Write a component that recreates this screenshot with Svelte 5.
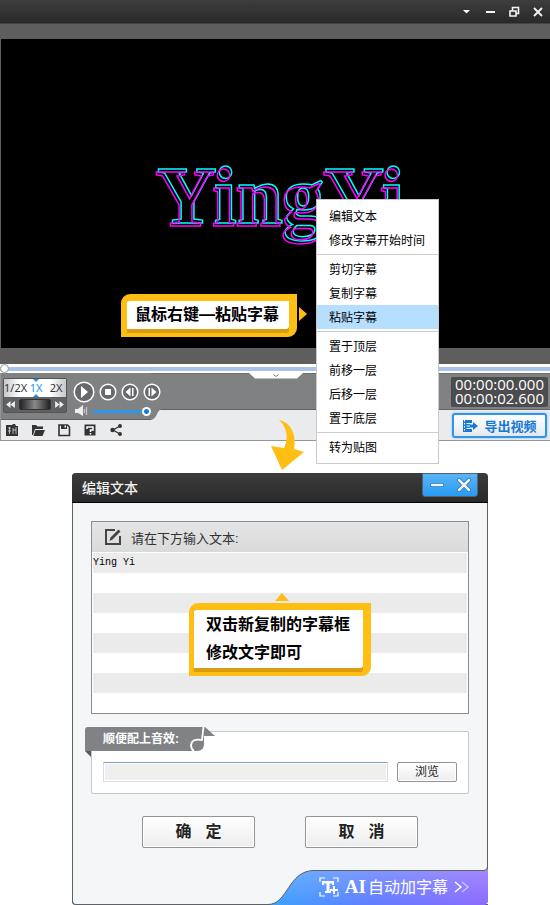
<script>
  const menuGroups = [
    ["编辑文本", "修改字幕开始时间"],
    ["剪切字幕", "复制字幕", "粘贴字幕"],
    ["置于顶层", "前移一层", "后移一层", "置于底层"],
    ["转为贴图"],
  ];

  let selected = "粘贴字幕";
  let position = 0;
  let volume = 100;
  let text = "Ying Yi";
  let sound = "";
</script>

<main>
  <section class="editor">
    <header class="titlebar">
      <button aria-label="菜单"><svg viewBox="0 0 24 24"><path d="M9 10h7l-3.500 3.500z" fill="#fff" /></svg></button>
      <button aria-label="最小化"><svg viewBox="0 0 24 24"><path d="M8 12h9" /></svg></button>
      <button aria-label="还原"><svg viewBox="0 0 24 24"><path d="M8 11h6v5h-6zM10.500 10.500v-3h6v6h-2" stroke-width="1.600" /></svg></button>
      <button aria-label="关闭"><svg viewBox="0 0 24 24"><path d="M8 8l8 8M16 8l-8 8" stroke-width="1.800" /></svg></button>
    </header>

    <div class="preview">
      <svg class="caption" viewBox="0 0 250 100" role="img" aria-label="YingYi">
        <text x="4" y="83">YingYi</text>
      </svg>
    </div>

    <input class="seek" type="range" aria-label="播放进度" bind:value={position} />

    <div class="deck">
      <div class="left">
        <div class="playback">
          <div class="speed">
            <div class="rates">
              <button>1/2X</button>
              <button class="active">1X</button>
              <button>2X</button>
            </div>
            <div class="dial">
              <button aria-label="减速"><svg viewBox="0 0 10 8"><path d="M5 0v8L0 4zM10 0v8L5 4z" /></svg></button>
              <span class="wheel"></span>
              <button aria-label="加速"><svg viewBox="0 0 10 8"><path d="M5 0v8l5-4zM0 0v8l5-4z" /></svg></button>
            </div>
          </div>
          <div class="transport">
            <div class="buttons">
              <button class="play" aria-label="播放"><svg viewBox="0 0 22 22"><circle cx="11" cy="11" r="9.800" /><path d="M8 5v12l7-6z" /></svg></button>
              <button aria-label="停止"><svg viewBox="0 0 18 18"><circle cx="9" cy="9" r="7.800" /><path d="M6 6h6v6H6z" /></svg></button>
              <button aria-label="上一帧"><svg viewBox="0 0 18 18"><circle cx="9" cy="9" r="7.800" /><path d="M9.500 4.500v9L4.500 9zM11 5h1.500v8H11z" /></svg></button>
              <button aria-label="下一帧"><svg viewBox="0 0 18 18"><circle cx="9" cy="9" r="7.800" /><path d="M8.500 4.500v9l5-4.500zM5.500 5H7v8H5.500z" /></svg></button>
            </div>
            <label class="volume">
              <svg viewBox="0 0 14 12"><path d="M0 4h3l5-4v11L3 8H0z" fill="#eee" /><path d="M9.500 4v4M11.500 2v8" stroke="#c4c4c4" stroke-width="1.300" fill="none" /></svg>
              <input type="range" aria-label="音量" bind:value={volume} />
            </label>
          </div>
        </div>
        <div class="tools">
          <button aria-label="新建"><svg viewBox="0 0 14 14"><path d="M1 2h6l1-1h2l1 2h2v10H1z" fill="#333" /><path d="M3 5h3M4.500 4v7M3 8h3M8 5v6M11 4v7M8 7h3" stroke="#e9eaec" fill="none" stroke-width=".7" /></svg></button>
          <button aria-label="打开"><svg viewBox="0 0 14 14"><path d="M1 2h4l1.500 1.500H12V6H4l-2 6H1z" fill="#333" /><path d="M4.500 7H14l-2.500 6H2.500z" fill="#333" /></svg></button>
          <button aria-label="保存"><svg viewBox="0 0 14 14"><path d="M2 2h8.500L12.500 4v8.500H2z" fill="none" stroke="#333" stroke-width="1.600" /><path d="M4 2h6v4H4z" fill="#333" /><path d="M7.500 2.500h1.500v2H7.500z" fill="#fff" /></svg></button>
          <button aria-label="帮助"><svg viewBox="0 0 14 14"><path d="M1.500 1.500h11v11h-11z" fill="#333" /><path d="M4 6V4h6v3H7.500v2M7.500 10v1.500" fill="none" stroke="#fff" stroke-width="1.500" /></svg></button>
          <button aria-label="分享"><svg viewBox="0 0 14 14"><path d="M11 3L4 7l7 4" fill="none" stroke="#333" stroke-width="1.300" /><circle cx="3.500" cy="7" r="2.200" fill="#333" /><circle cx="11" cy="3" r="2" fill="#333" /><circle cx="11" cy="11" r="2" fill="#333" /></svg></button>
        </div>
      </div>

      <button class="collapse" aria-label="收起">
        <svg viewBox="0 0 54 6"><path d="M0 0h54l-6 5.500H6z" fill="#fff" /><path d="M24.500 1.500l2.500 2 2.500-2" fill="none" stroke="#777" /></svg>
      </button>

      <div class="right">
        <div class="timecode">
          <time>00:00:00.000</time>
          <time>00:00:02.600</time>
        </div>
        <button class="export">
          <svg viewBox="0 0 16 14"><path d="M1 1h9v3H8v6h2v3H1z" fill="#1679d4" /><path d="M2.500 1v12" stroke="#fff" stroke-dasharray="1.500 1.500" /><path d="M4.500 4.500H8M4.500 7H8M4.500 9.500H8" stroke="#fff" /><path d="M8 5.500h3V3l5 4-5 4V8.500H8z" fill="#1679d4" /></svg>
          导出视频
        </button>
      </div>
    </div>

    <p class="callout paste">鼠标右键—粘贴字幕</p>

    <div class="menu" role="menu">
      {#each menuGroups as group}
        <div class="group">
          {#each group as item}
            <button role="menuitem" class:selected={item === selected} on:mouseenter={() => selected = item}>{item}</button>
          {/each}
        </div>
      {/each}
    </div>

    <svg class="arrow" viewBox="0 0 34 51">
      <path d="M8 0c11 2 18 14 15 29l10 3-22 18L0 26l13 2C18 18 16 7 8 0z" fill="#ffbe14" />
    </svg>
  </section>

  <section class="dialog">
    <header>
      <h1>编辑文本</h1>
      <div class="window-buttons">
        <button aria-label="最小化"><svg viewBox="0 0 16 16"><path d="M3 8h10" stroke="#1a72bd" stroke-width="4" /><path d="M3 8h10" stroke="#f3f3f3" stroke-width="2.500" /></svg></button>
        <button aria-label="关闭"><svg viewBox="0 0 16 16"><path d="M3 3l10 10M13 3L3 13" stroke="#1a72bd" stroke-width="4" /><path d="M3 3l10 10M13 3L3 13" stroke="#f3f3f3" stroke-width="2.500" /></svg></button>
      </div>
    </header>

    <div class="content">
      <div class="text-box">
        <label for="caption-text">
          <svg viewBox="0 0 18 18"><path d="M11 2H2v14h14V8" fill="none" stroke="#444" stroke-width="2" /><path d="M5.500 13l1-3.500L14.500 1.500l2 2L8.500 11.500z" fill="#444" /></svg>
          请在下方输入文本:
        </label>
        <textarea id="caption-text" spellcheck="false" bind:value={text}></textarea>
        <p class="callout edit">双击新复制的字幕框<br />修改文字即可</p>
      </div>

      <div class="sound-box">
        <label for="sound-file">
          顺便配上音效:
        </label>
        <svg class="note" viewBox="0 0 28 26">
          <path d="M0 1h18l10 9H17v8q0 7-7 7H0z" fill="#808285" />
          <path d="M16.500 1L15 14Q5 12 4 19q0 4 3 6" fill="none" stroke="#fff" stroke-width="1.800" />
        </svg>
        <div class="file-row">
          <input id="sound-file" type="text" bind:value={sound} />
          <button class="browse">浏览</button>
        </div>
      </div>

      <div class="actions">
        <button>确<span></span>定</button>
        <button>取<span></span>消</button>
      </div>
    </div>

    <a class="banner" href="#ai">
      <svg class="shape" viewBox="0 0 226 35" preserveAspectRatio="none">
        <defs>
          <linearGradient id="ai-fill">
            <stop offset="0" stop-color="#3aa5ff" />
            <stop offset="0.500" stop-color="#627dff" />
            <stop offset="1" stop-color="#8d6bff" />
          </linearGradient>
          <linearGradient id="ai-shine" x2="0" y2="1">
            <stop offset="0" stop-color="#fff" stop-opacity="0.200" />
            <stop offset="1" stop-color="#fff" stop-opacity="0" />
          </linearGradient>
        </defs>
        <path d="M0 34.500h6C26 34.500 26 .5 52 .5H223l3-2V32l-3 3H0z" fill="url(#ai-fill)" />
        <path d="M0 35h6C26 35 26 .5 52 .5H223l3-2V32l-3 3z" fill="url(#ai-shine)" />
        <path d="M0 34.500h6C26 34.500 26 .5 52 .5H222q3.500 0 3.500-4" fill="none" stroke="#5d6065" />
      </svg>
      <svg class="ai-icon" viewBox="0 0 20 20"><path d="M1 5V1h5M14 1h5v4M1 15v4h5M14 19h5v-4" fill="none" stroke="#fff" stroke-width="1.200" /><path d="M3 4h12v4h-2V6.500h-2.500V14H12v2H6v-2h1.500V6.500H5V8H3zM14 9h2v3h3v2h-3v3h-2v-3h-3v-2h3z" fill="#fff" /></svg>
      <span><b>AI</b>自动加字幕</span>
      <svg class="more" viewBox="0 0 15 12"><path d="M1 1l6 5-6 5" stroke="#fff" /><path d="M8 1l6 5-6 5" stroke="#c9c0ff" /></svg>
    </a>
  </section>
</main>

<style>
  :global(body) {
    background: #fff;
    font-family: "Liberation Sans", "Noto Sans CJK SC", sans-serif;
  }

  main :global(*) {
    box-sizing: border-box;
  }

  button {
    padding: 0;
    border: 0;
    background: none;
    font-family: inherit;
    color: inherit;
  }

  svg {
    display: block;
    flex-shrink: 0;
  }

  /* editor */
  .editor {
    position: relative;
  }

  .titlebar {
    display: flex;
    justify-content: flex-end;
    height: 24px;
    background: linear-gradient(#3d3d3d, #292929);
    border-bottom: 1px solid #444;
  }

  .titlebar svg {
    width: 24px;
    height: 24px;
    fill: none;
    stroke: #f4f4f4;
    stroke-width: 2;
  }

  .titlebar button:first-child svg {
    stroke: none;
  }

  .preview {
    display: flex;
    justify-content: center;
    height: 340px;
    padding-top: 104px;
    background: #000;
    border: solid #5e5e5e;
    border-width: 15px 0 16px 1px;
  }

  /* magenta outline with a cyan copy up and to the right */
  .caption {
    width: 250px;
    height: 100px;
    font-family: "Liberation Serif", serif;
    font-size: 83px;
    font-weight: bold;
    fill: none;
    stroke: #f0f;
    stroke-width: 1.500;
    overflow: visible;
    filter: drop-shadow(2px -3px 0 #0ff);
  }

  .seek {
    display: block;
    appearance: none;
    width: 100%;
    height: 9px;
    margin: 0;
    background: linear-gradient(#fff 3px, #a9c1e6 3px 7px, #fff 7px);
  }

  .seek::-webkit-slider-thumb {
    appearance: none;
    width: 9px;
    height: 9px;
    border-radius: 50%;
    border: 1px solid #9a9a9a;
    background: #fff;
  }

  .deck {
    display: grid;
    grid-template-columns: 1fr auto 1fr;
    height: 68px;
    border: solid #949699;
    border-width: 0 0 1px 1px;
    background: linear-gradient(#6c6d6f 1px, #808183 1px 36px, #626365 36px 37px, #eaebed 37px);
  }

  .playback {
    position: relative;
    display: flex;
    gap: 6px;
    width: 150px;
    height: 47px;
    padding: 5px 0 0 2px;
    background: #808183;
    border-bottom: 1px solid #626365;
  }

  /* sloped end of the grey panel */
  .playback::after {
    content: "";
    position: absolute;
    left: 100%;
    bottom: -1px;
    width: 12px;
    height: 11px;
    background: #808183;
    clip-path: path("M0 0H12Q8 0 6 5T0 11z");
  }

  .speed {
    width: 66px;
    height: 35px;
    border: 1px solid #555;
    border-radius: 2px;
    background: #606164;
    color: #333;
  }

  .rates {
    display: grid;
    grid-template-columns: 22px 20px 20px;
    height: 18px;
    background: linear-gradient(90deg, #c6c6cc, #fff 25%, #fff 75%, #c6c6cc);
    overflow: hidden;
  }

  .rates button {
    font: 11px/18px "Noto Sans", sans-serif;
    white-space: nowrap;
  }

  .rates .active {
    position: relative;
    color: #1c94ec;
  }

  .rates .active::before,
  .rates .active::after {
    content: "";
    position: absolute;
    left: 7px;
    border: solid transparent;
    border-width: 0 3px;
  }

  .rates .active::before {
    top: 0;
    border-top: 3px solid #1c94ec;
  }

  .rates .active::after {
    bottom: 0;
    border-bottom: 3px solid #1c94ec;
  }

  .dial {
    display: flex;
    align-items: center;
    justify-content: space-around;
    height: 15px;
  }

  .dial svg {
    width: 9px;
    height: 7px;
    fill: #eee;
  }

  .wheel {
    width: 32px;
    height: 11px;
    border-radius: 2px;
    background: linear-gradient(90deg, #222, #888 50%, #222);
    border: 1px solid #333;
  }

  .transport {
    position: relative;
    z-index: 1;
  }

  .buttons {
    display: flex;
    align-items: center;
    gap: 4px;
    height: 28px;
  }

  .buttons svg {
    width: 18px;
    height: 18px;
    fill: #fff;
  }

  .buttons .play svg {
    width: 22px;
    height: 22px;
  }

  .buttons circle {
    fill: #67686b;
    stroke: #fff;
    stroke-width: 1.500;
  }

  .volume {
    display: flex;
    align-items: center;
    gap: 4px;
    height: 10px;
    padding-left: 2px;
  }

  .volume svg {
    width: 14px;
    height: 12px;
  }

  .volume input {
    appearance: none;
    width: 58px;
    height: 9px;
    margin: 0;
    background: linear-gradient(transparent 3px, #2c95ed 3px 6px, transparent 6px);
  }

  .volume input::-webkit-slider-thumb {
    appearance: none;
    width: 9px;
    height: 9px;
    border-radius: 50%;
    background: radial-gradient(#1679d4 2px, #fff 3px);
  }

  .tools {
    display: flex;
    align-items: center;
    gap: 12px;
    height: 20px;
    padding-left: 4px;
  }

  .tools svg {
    width: 14px;
    height: 14px;
  }

  .collapse {
    align-self: start;
  }

  .collapse svg {
    width: 54px;
    height: 6px;
  }

  .right {
    display: flex;
    flex-direction: column;
    align-items: flex-end;
    gap: 6px;
    padding: 4px 2px 0 0;
  }

  .timecode {
    display: grid;
    width: 97px;
    height: 30px;
    padding: 0 4px 2px;
    border-radius: 2px;
    background: #4c4c4e;
    color: #fff;
    font: 15px/14px "Open Sans", sans-serif;
  }

  .export {
    display: flex;
    align-items: center;
    justify-content: center;
    gap: 6px;
    width: 95px;
    height: 25px;
    margin-right: 1px;
    border: 2px solid #2f95ea;
    border-radius: 3px;
    background: linear-gradient(#fff, #e4e8ee);
    box-shadow: 0 0 2px #6bb8f8;
    color: #1679d4;
    font-size: 13px;
    font-weight: bold;
    white-space: nowrap;
  }

  .export svg {
    width: 16px;
    height: 14px;
  }

  /* hints */
  .callout {
    position: absolute;
    margin: 0;
    border: solid #ffbe14;
    border-radius: 9px 0 9px 0;
    background: #fff;
    color: #000;
    font-size: 16px;
    font-weight: bold;
    line-height: 28px;
    white-space: nowrap;
  }

  .callout::before {
    content: "";
    position: absolute;
    inset: 0;
    border-radius: 3px 0 3px 0;
    box-shadow: 0 4px #dc9c10;
    pointer-events: none;
  }

  .callout::after {
    content: "";
    position: absolute;
    background: #ffbe14;
  }

  .paste {
    left: 121px;
    top: 294px;
    padding: 0 10px 0 8px;
    border-width: 7px 8px 8px 6px;
  }

  .paste::after {
    left: calc(100% + 10px);
    top: 6px;
    width: 8px;
    height: 14px;
    clip-path: polygon(0 0, 100% 50%, 0 100%);
  }

  .edit {
    left: 97px;
    top: 81px;
    padding: 1px 13px 1px 12px;
    border-width: 7px 8px 8px 5px;
  }

  .edit::after {
    left: 81px;
    bottom: calc(100% + 9px);
    width: 14px;
    height: 8px;
    clip-path: polygon(50% 0, 100% 100%, 0 100%);
  }

  .menu {
    position: absolute;
    left: 316px;
    top: 199px;
    width: 123px;
    padding: 4px 0;
    border: 1px solid #c9c9c9;
    background: #fff;
  }

  .menu button {
    display: block;
    width: 100%;
    padding: 2px 0 0 12px;
    font-size: 12px;
    line-height: 22px;
    text-align: left;
    color: #000;
  }

  .menu .selected {
    background: #b5deff;
  }

  .group + .group::before {
    content: "";
    display: block;
    height: 1px;
    margin: 2px 0;
    background: #ccc;
  }

  .arrow {
    position: absolute;
    left: 271px;
    top: 420px;
    width: 34px;
    height: 51px;
  }

  /* dialog */
  .dialog {
    margin: 32px 62px 0 72px;
    border-left: 1px solid #5d6065;
    border-radius: 4px 4px 0 4px;
    background: #f5f6f8;
  }

  .dialog header {
    display: flex;
    justify-content: space-between;
    height: 30px;
    margin-left: -1px;
    padding: 0 10px;
    border-bottom: 1px solid #000;
    border-radius: 4px 4px 0 0;
    background: linear-gradient(#3c3c3c, #2a2a2a);
  }

  h1 {
    margin: 0;
    color: #f0f0f0;
    font-size: 14px;
    font-weight: 500;
    line-height: 30px;
  }

  .window-buttons {
    display: flex;
    align-items: center;
    justify-content: space-around;
    width: 56px;
    height: 24px;
    border: 1px solid #596069;
    border-radius: 0 0 3px 3px;
    background: linear-gradient(#5ab4f5, #279bf5);
  }

  .window-buttons svg {
    width: 16px;
    height: 16px;
    fill: none;
    stroke-linecap: round;
  }

  .content {
    padding: 18px 18px 22px;
    border-right: 1px solid #5d6065;
  }

  .text-box {
    position: relative;
    border: 1px solid #8c8d8f;
    background: #fff;
  }

  .text-box label {
    display: flex;
    align-items: center;
    gap: 9px;
    height: 31px;
    padding-left: 12px;
    border-bottom: 1px solid #fff;
    background: linear-gradient(#e5e5e5, #d9dadb);
    color: #333;
    font-size: 13px;
  }

  .text-box label svg {
    width: 18px;
    height: 18px;
  }

  textarea {
    display: block;
    width: calc(100% - 2px);
    height: 160px;
    margin: 0 1px;
    padding: 0;
    border: 0;
    resize: none;
    background: repeating-linear-gradient(#ebebeb 0 20px, #fff 20px 40px);
    color: #000;
    font: 10px/20px "Liberation Mono", monospace;
  }

  .sound-box {
    position: relative;
    margin-top: 17px;
    padding: 30px 11px 11px;
    border: 1px solid #c3c8cb;
    border-radius: 2px;
    background: #fff;
  }

  .sound-box label {
    position: absolute;
    left: -7px;
    top: -5px;
    width: 104px;
    padding-left: 18px;
    border-radius: 3px 0 0 0;
    background: #808285;
    color: #fff;
    font-size: 12px;
    font-weight: bold;
    line-height: 24px;
    white-space: nowrap;
  }

  .sound-box label::after {
    content: "";
    position: absolute;
    left: 0;
    top: 100%;
    width: 6px;
    height: 6px;
    background: #58595b;
    clip-path: polygon(0 0, 100% 0, 100% 100%);
  }

  .note {
    position: absolute;
    left: 95px;
    top: -6px;
    width: 28px;
    height: 26px;
  }

  .file-row {
    display: flex;
    gap: 9px;
  }

  .file-row input {
    flex: 1;
    min-width: 0;
    height: 20px;
    border: 1px solid #d3dfea;
    border-top-color: #7ba0c0;
    box-shadow: inset 0 0 0 1px #fff;
    background: #efefef;
    font-size: 12px;
  }

  .browse,
  .actions button {
    border: 1px solid #929497;
    border-radius: 2px;
    background: linear-gradient(#fff, #ededed);
    box-shadow: inset 0 0 0 1px #fff;
    color: #222;
  }

  .browse {
    width: 60px;
    height: 20px;
    font-size: 12px;
    line-height: 16px;
  }

  .actions {
    display: flex;
    justify-content: center;
    gap: 50px;
    margin-top: 22px;
  }

  .actions button {
    width: 113px;
    height: 32px;
    font-size: 16px;
    font-weight: bold;
    line-height: 30px;
  }

  .actions span {
    display: inline-block;
    width: 14px;
  }

  .banner {
    position: relative;
    display: flex;
    align-items: center;
    justify-content: flex-end;
    gap: 6px;
    height: 35px;
    margin-left: -1px;
    padding-right: 19px;
    border-radius: 0 0 0 4px;
    border-bottom: 1px solid #5d6065;
    border-left: 1px solid #5d6065;
    color: #fff;
    font-size: 16px;
    line-height: 24px;
    text-decoration: none;
  }

  .shape {
    position: absolute;
    right: 0;
    top: 0;
    width: 226px;
    height: 35px;
    overflow: visible;
  }

  .banner span,
  .ai-icon,
  .more {
    position: relative;
  }

  .banner b {
    margin-right: 2px;
    font-family: "Liberation Serif", serif;
    font-size: 19px;
  }

  .ai-icon {
    width: 20px;
    height: 20px;
  }

  .more {
    width: 15px;
    height: 12px;
    fill: none;
    stroke-width: 1.500;
  }
</style>
